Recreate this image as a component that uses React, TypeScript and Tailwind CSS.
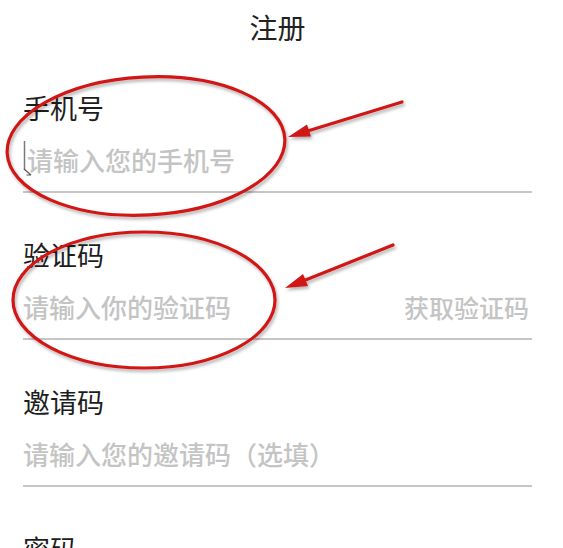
import React from "react";

type FieldProps = {
  label: string;
  placeholder: string;
  first?: boolean;
  indent?: boolean;
  action?: string;
};

function Field({ label, placeholder, first, indent, action }: FieldProps) {
  return (
    <div className={`${first ? "pt-[36px]" : "pt-[44px]"} pb-[5px] border-b-2 border-[#c6c6c6]`}>
      <div className="text-[27px] leading-[36px] text-[#1d1d1d]">{label}</div>
      <div className="mt-[8px] h-[52px] flex items-center justify-between">
        <input
          className={`flex-1 min-w-0 bg-transparent outline-none text-[26px] leading-[52px] font-medium text-[#333] placeholder:text-[#c4c4c4] ${indent ? "pl-[4px]" : ""}`}
          placeholder={placeholder}
        />
        {action && (
          <button className="pr-[3px] text-[25px] leading-[52px] font-medium text-[#c4c4c4]">{action}</button>
        )}
      </div>
    </div>
  );
}

function Annotations() {
  return (
    <svg className="absolute inset-0 pointer-events-none" width="563" height="548" viewBox="0 0 563 548">
      <defs>
        <filter id="shadow" x="-10%" y="-10%" width="120%" height="130%">
          <feDropShadow dx="1.5" dy="2.5" stdDeviation="1.8" floodColor="#000" floodOpacity="0.3" />
        </filter>
      </defs>

      {/* text cursor */}
      <line x1="24.5" y1="141" x2="24.5" y2="170" stroke="#7a7a7a" strokeWidth="1.5" />
      <path d="M24 169 L31 175 M26.5 175 L31 175" stroke="#555" strokeWidth="1.2" fill="none" />

      <g filter="url(#shadow)" stroke="#d11717" fill="none" strokeLinecap="round">
        <ellipse cx="146" cy="146" rx="139" ry="69" strokeWidth="3.2" transform="rotate(-3 146 146)" />
        <ellipse cx="144" cy="300" rx="131" ry="68" strokeWidth="3.2" />

        <line x1="402" y1="102" x2="306" y2="131.5" strokeWidth="3.2" />
        <polygon points="288,137 311,136.5 307,124.5" fill="#d11717" stroke="none" />

        <line x1="393" y1="245" x2="303" y2="281" strokeWidth="3.2" />
        <polygon points="285,288 308,286 303,274" fill="#d11717" stroke="none" />
      </g>
    </svg>
  );
}

export default function App() {
  return (
    <div className="relative w-[563px] h-[548px] overflow-hidden bg-white font-['Noto_Sans_CJK_SC',sans-serif]">
      <div className="pl-[23px] pr-[31px]">
        <header className="h-[54px] flex items-center justify-center text-[28px] text-[#222]">注册</header>
        <Field first indent label="手机号" placeholder="请输入您的手机号" />
        <Field label="验证码" placeholder="请输入你的验证码" action="获取验证码" />
        <Field label="邀请码" placeholder="请输入您的邀请码（选填）" />
        <Field label="密码" placeholder="请输入您的密码" />
      </div>
      <Annotations />
    </div>
  );
}
